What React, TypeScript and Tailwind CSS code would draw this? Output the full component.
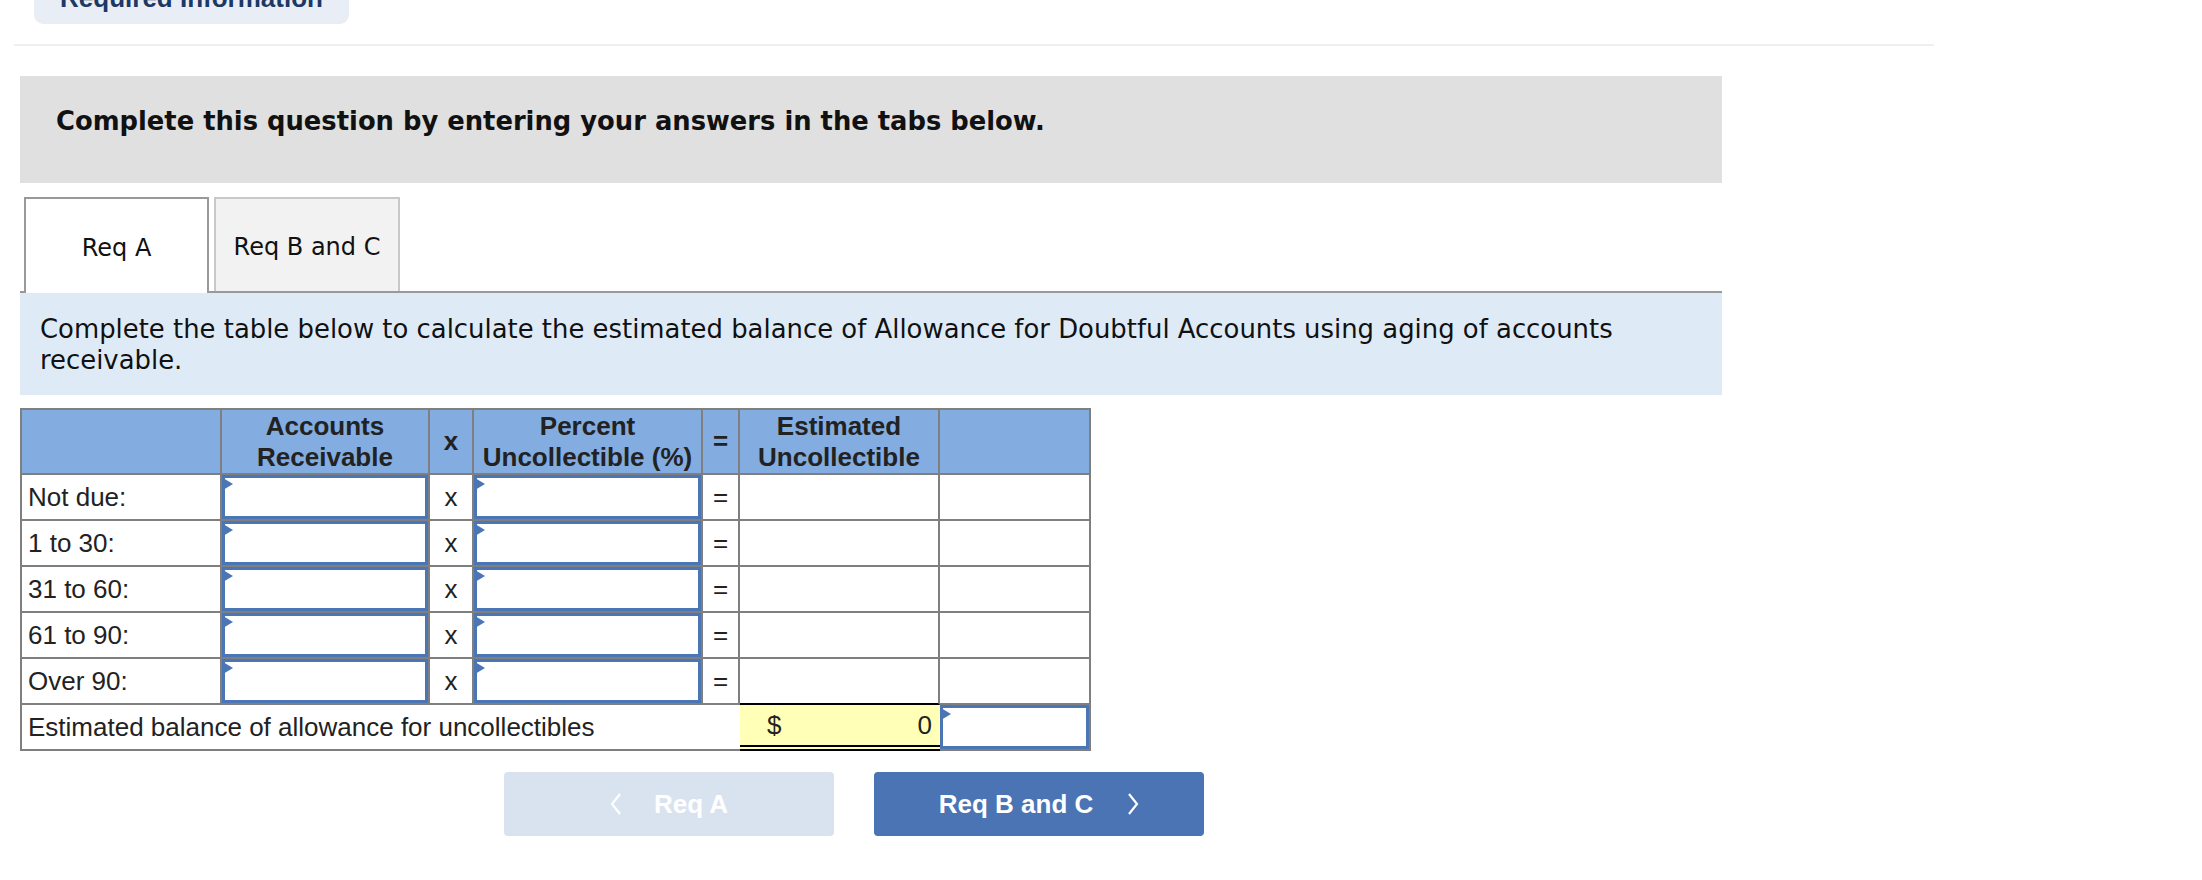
import React from "react";

const rows = ["Not due:", "1 to 30:", "31 to 60:", "61 to 90:", "Over 90:"];

const verdana = "font-['DejaVu_Sans',Verdana,sans-serif]";
const arial = "font-['Liberation_Sans',Arial,sans-serif]";

function Flag() {
  return (
    <span className="absolute left-[-2px] top-0 h-0 w-0 border-y-[6px] border-l-[10px] border-y-transparent border-l-[#4a76b5]" />
  );
}

function InputBox() {
  return (
    <div className="relative h-[44px] w-full border-[3px] border-[#4a76b5] bg-white">
      <Flag />
    </div>
  );
}

function Chevron({ dir }: { dir: "left" | "right" }) {
  return (
    <svg width="12" height="22" viewBox="0 0 12 22" fill="none" stroke="white" strokeWidth="2.2">
      {dir === "left" ? <polyline points="10,1 2,11 10,21" /> : <polyline points="2,1 10,11 2,21" />}
    </svg>
  );
}

export default function App() {
  const g = "border-[#7f7f7f]";
  return (
    <div className="min-h-[880px] w-[2202px] bg-white">
      {/* Required information button, mostly scrolled out of view */}
      <div className="ml-[34px] h-[24px] w-[315px] overflow-hidden rounded-b-[9px] bg-[#e9eef6]">
        <div className={`${arial} mt-[-15px] text-center text-[26px] font-bold leading-[26px] text-[#1c3966]`}>
          Required Information
        </div>
      </div>
      <div className="ml-[14px] mt-[20px] h-[2px] w-[1920px] bg-[#efefef]" />

      <div className="ml-[20px] w-[1702px]">
        {/* Instructions */}
        <div className={`${verdana} mt-[30px] h-[107px] bg-[#e0e0e0] pl-[36px] pt-[30px] text-[25.8px] font-bold leading-[30px] text-[#111]`}>
          Complete this question by entering your answers in the tabs below.
        </div>

        {/* Tabs */}
        <div className={`${verdana} mt-[14px] flex h-[96px] gap-[5px] border-b-2 border-[#999] pl-[4px] text-[24px] text-[#111]`}>
          <div className="z-10 flex h-[96px] w-[185px] items-center justify-center border-x-2 border-t-2 border-[#999] bg-white pt-[4px]">
            Req A
          </div>
          <div className="flex h-[94px] w-[186px] items-center justify-center border-x-2 border-t-2 border-[#c8c8c8] bg-[#f2f2f2] pt-[4px]">
            Req B and C
          </div>
        </div>

        <div className={`${verdana} h-[102px] bg-[#deebf7] pl-[20px] pr-[20px] pt-[21px] text-[25.9px] leading-[31px] text-[#111]`}>
          Complete the table below to calculate the estimated balance of Allowance for Doubtful Accounts using aging of
          accounts receivable.
        </div>

        {/* Aging table */}
        <table className={`${arial} mt-[13px] w-[1071px] table-fixed border-separate border-spacing-0 text-[26px] text-[#222]`}>
          <colgroup>
            <col className="w-[202px]" />
            <col className="w-[208px]" />
            <col className="w-[44px]" />
            <col className="w-[229px]" />
            <col className="w-[37px]" />
            <col className="w-[200px]" />
            <col className="w-[151px]" />
          </colgroup>
          <thead>
            <tr className="bg-[#83ace0] font-bold leading-[31px]">
              <th className={`h-[67px] border-2 ${g}`}></th>
              <th className={`border-y-2 border-r-2 ${g} p-0`}>
                Accounts
                <br />
                Receivable
              </th>
              <th className={`border-y-2 border-r-2 ${g} p-0`}>x</th>
              <th className={`border-y-2 border-r-2 ${g} p-0`}>
                Percent
                <br />
                Uncollectible (%)
              </th>
              <th className={`border-y-2 border-r-2 ${g} p-0`}>=</th>
              <th className={`border-y-2 border-r-2 ${g} p-0`}>
                Estimated
                <br />
                Uncollectible
              </th>
              <th className={`border-y-2 border-r-2 ${g} p-0`}></th>
            </tr>
          </thead>
          <tbody>
            {rows.map((label, i) => (
              <tr key={label}>
                <td className={`h-[46px] border-x-2 border-b-2 ${g} pl-[6px]`}>{label}</td>
                <td className={`border-b-2 border-r-2 ${g} p-0 align-top`}>
                  <InputBox />
                </td>
                <td className={`border-b-2 border-r-2 ${g} text-center`}>x</td>
                <td className={`border-b-2 border-r-2 ${g} p-0 align-top`}>
                  <InputBox />
                </td>
                <td className={`border-b-2 border-r-2 ${g} text-center`}>=</td>
                {i === rows.length - 1 ? (
                  <td className="border-b-2 border-r-2 border-b-black border-r-[#7f7f7f]"></td>
                ) : (
                  <td className={`border-b-2 border-r-2 ${g}`}></td>
                )}
                <td className={`border-b-2 border-r-2 ${g}`}></td>
              </tr>
            ))}
            <tr>
              <td colSpan={5} className={`h-[46px] border-b-2 border-l-2 ${g} pl-[6px]`}>
                Estimated balance of allowance for uncollectibles
              </td>
              <td className="border-b-[6px] border-double border-black bg-[#ffffb8] p-0">
                <div className="flex items-center justify-between pl-[27px] pr-[8px]">
                  <span>$</span>
                  <span>0</span>
                </div>
              </td>
              <td className={`border-b-2 border-r-2 ${g} p-0 align-top`}>
                <InputBox />
              </td>
            </tr>
          </tbody>
        </table>

        {/* Navigation */}
        <div className={`${arial} ml-[484px] mt-[21px] flex gap-[40px] text-[26px] font-bold text-white`}>
          <button className="flex h-[64px] w-[330px] items-center justify-center gap-[32px] rounded-[4px] bg-[#d9e3ef]">
            <Chevron dir="left" />
            <span>Req A</span>
          </button>
          <button className="flex h-[64px] w-[330px] items-center justify-center gap-[34px] rounded-[4px] bg-[#4a74b3]">
            <span>Req B and C</span>
            <Chevron dir="right" />
          </button>
        </div>
      </div>
    </div>
  );
}
